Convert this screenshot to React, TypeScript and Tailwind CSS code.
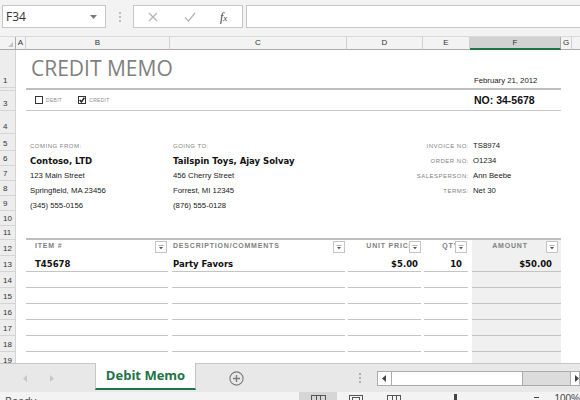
import React from 'react';

const grid = 'grid grid-cols-[16px_10px_144px_177px_76px_47px_91px_11px_1fr]';
const heavy = "font-['DejaVu_Sans',Verdana,sans-serif] font-bold";
const capLbl = 'text-[6px] leading-none tracking-[0.5px] text-[#7f7f7f]';
const reg = 'text-[7.75px] leading-none text-[#1a1a1a]';
const thLbl = 'text-[7px] leading-none font-bold tracking-[0.8px] text-[#808080] whitespace-nowrap';
const cellLine = 'border-b border-[#c4c4c4]';

const RowHead = ({ n }: { n?: string }) => (
  <div className="col-start-1 row-start-1 flex items-end pl-[3px] pb-[2px] bg-[#ededed] border-r border-b border-[#d4d4d4] text-[8px] leading-none text-[#333]">
    {n}
  </div>
);

const Row = ({ h, n, children }: { h: string; n?: string; children?: React.ReactNode }) => (
  <div className={`${grid} ${h}`}>
    <RowHead n={n} />
    {children}
  </div>
);

const Filter = ({ className }: { className: string }) => (
  <div className={`relative w-[12px] h-[12px] shrink-0 bg-white border border-[#c6c6c6] flex items-center justify-center ${className}`}>
    <svg width="6" height="5" viewBox="0 0 6 5">
      <path d="M0.5 0.5h5" stroke="#9a9a9a" strokeWidth="0.8" />
      <path d="M1 2h4L3 4.2z" fill="#555" />
    </svg>
  </div>
);

const Check = ({ on, label, className }: { on?: boolean; label: string; className?: string }) => (
  <div className={`flex items-center gap-[3px] ${className ?? ''}`}>
    <div className="w-[8px] h-[8px] border border-[#333] bg-white flex items-center justify-center">
      {on && (
        <svg width="6" height="6" viewBox="0 0 6 6">
          <path d="M0.7 3 L2.4 4.9 L5.4 0.8" stroke="#222" strokeWidth="1.5" fill="none" />
        </svg>
      )}
    </div>
    <span className="text-[5px] leading-none tracking-[0.3px] text-[#8c8c8c]">{label}</span>
  </div>
);

const FormulaBar = () => (
  <div className="h-[37px] shrink-0 bg-[#f3f3f3] flex items-start pt-[5px] border-b border-[#dadada]">
    <div className="ml-[2px] w-[104px] h-[23px] bg-white border border-[#c6c6c6] flex items-center pl-[3px] pr-[8px]">
      <span className="text-[12px] text-[#333] font-['Open_Sans',sans-serif]">F34</span>
      <svg className="ml-auto" width="7" height="4" viewBox="0 0 7 4">
        <path d="M0 0h7L3.5 4z" fill="#7a7a7a" />
      </svg>
    </div>
    <div className="w-[27px] h-[23px] flex flex-col items-center justify-center gap-[2px]">
      <div className="w-[2px] h-[2px] bg-[#bdbdbd]" />
      <div className="w-[2px] h-[2px] bg-[#bdbdbd]" />
      <div className="w-[2px] h-[2px] bg-[#bdbdbd]" />
    </div>
    <div className="w-[110px] h-[23px] bg-white border border-[#c6c6c6] flex items-center">
      <svg className="ml-[14px]" width="10" height="10" viewBox="0 0 10 10">
        <path d="M1 1L9 9M9 1L1 9" stroke="#b4b4b4" strokeWidth="1.2" />
      </svg>
      <svg className="ml-[26px]" width="12" height="10" viewBox="0 0 12 10">
        <path d="M1 5.5L4.5 9L11 1" stroke="#b4b4b4" strokeWidth="1.2" fill="none" />
      </svg>
      <span className="ml-[24px] font-['Liberation_Serif',serif] italic text-[12px] text-[#444] leading-none">
        f<span className="text-[9px]">x</span>
      </span>
    </div>
    <div className="ml-[3px] flex-1 h-[23px] bg-white border border-[#c6c6c6] border-r-0" />
  </div>
);

const ColHeaders = () => (
  <div className={`${grid} h-[13px] shrink-0 bg-[#f3f3f3] text-[8px] leading-none text-[#333]`}>
    <div className="relative border-r border-b border-[#ababab]">
      <svg className="absolute right-[2px] bottom-[2px]" width="5" height="5" viewBox="0 0 5 5">
        <path d="M5 0V5H0z" fill="#c4c4c4" />
      </svg>
    </div>
    <div className="flex items-center justify-center border-r border-b border-r-[#d0d0d0] border-b-[#ababab]">A</div>
    <div className="flex items-center justify-center border-r border-b border-r-[#d0d0d0] border-b-[#ababab]">B</div>
    <div className="flex items-center justify-center border-r border-b border-r-[#d0d0d0] border-b-[#ababab]">C</div>
    <div className="flex items-center justify-center border-r border-b border-r-[#d0d0d0] border-b-[#ababab]">D</div>
    <div className="flex items-center justify-center border-r border-b border-r-[#d0d0d0] border-b-[#ababab]">E</div>
    <div className="flex items-center justify-center bg-[#d2d2d2] border-r border-r-[#ababab] border-b-2 border-b-[#217346]">F</div>
    <div className="flex items-center justify-center border-r border-b border-r-[#d0d0d0] border-b-[#ababab]">G</div>
    <div className="border-b border-[#ababab]" />
  </div>
);

const TableRow = ({ n, vals }: { n: string; vals?: string[] }) => {
  const v = vals ?? ['', '', '', '', ''];
  return (
    <Row h="h-[16px]" n={n}>
      <div className={`col-start-3 row-start-1 mr-[2px] ${cellLine} flex items-end pl-[9px] pb-[3px] ${heavy} text-[8.5px] leading-none text-[#111]`}>{v[0]}</div>
      <div className={`col-start-4 row-start-1 mx-[2px] ${cellLine} flex items-end pl-[1px] pb-[3px] ${heavy} text-[8.5px] leading-none text-[#111]`}>{v[1]}</div>
      <div className={`col-start-5 row-start-1 ml-[1px] mr-[2px] ${cellLine} flex items-end justify-end pr-[3px] pb-[3px] ${heavy} text-[8.5px] leading-none text-[#111]`}>{v[2]}</div>
      <div className={`col-start-6 row-start-1 ml-[1px] mr-[2px] ${cellLine} flex items-end justify-end pr-[6px] pb-[3px] ${heavy} text-[8.5px] leading-none text-[#111]`}>{v[3]}</div>
      <div className={`col-start-7 row-start-1 ml-[2px] bg-[#f0f0f0] ${cellLine} flex items-end justify-end pr-[9px] pb-[3px] ${heavy} text-[8.5px] leading-none text-[#111]`}>{v[4]}</div>
    </Row>
  );
};

const TabBar = () => (
  <div className="h-[29px] shrink-0 bg-[#e8e8e8] border-t border-[#c6c6c6] flex items-start">
    <div className="w-[96px] h-[28px] flex items-center">
      <svg className="ml-[23px]" width="4" height="7" viewBox="0 0 4 7">
        <path d="M4 0V7L0 3.5z" fill="#c8c8c8" />
      </svg>
      <svg className="ml-[23px]" width="4" height="7" viewBox="0 0 4 7">
        <path d="M0 0V7L4 3.5z" fill="#c8c8c8" />
      </svg>
    </div>
    <div className="-mt-px w-[101px] h-[27px] bg-white border-x border-[#c6c6c6] border-b-2 border-b-[#217346] flex items-center justify-center font-['Open_Sans',sans-serif] font-bold text-[13px] text-[#217346]">
      Debit Memo
    </div>
    <div className="w-[82px] h-[28px] flex items-center justify-center">
      <svg width="15" height="15" viewBox="0 0 15 15">
        <circle cx="7.5" cy="7.5" r="6.6" stroke="#7a7a7a" strokeWidth="1.1" fill="none" />
        <path d="M7.5 4v7M4 7.5h7" stroke="#7a7a7a" strokeWidth="1.3" />
      </svg>
    </div>
    <div className="w-[100px] h-[28px] flex flex-col items-start justify-center gap-[2px] pl-[82px]">
      <div className="w-[2px] h-[2px] bg-[#b0b0b0]" />
      <div className="w-[2px] h-[2px] bg-[#b0b0b0]" />
      <div className="w-[2px] h-[2px] bg-[#b0b0b0]" />
    </div>
    <div className="mt-[7px] flex-1 h-[15px] flex">
      <div className="w-[15px] h-[15px] bg-white border border-[#ababab] flex items-center justify-center">
        <svg width="4" height="7" viewBox="0 0 4 7">
          <path d="M4 0V7L0 3.5z" fill="#444" />
        </svg>
      </div>
      <div className="w-[131px] h-[15px] bg-white border-y border-r border-[#ababab]" />
      <div className="w-[47px] h-[15px] bg-[#dcdcdc] border-y border-[#ababab]" />
      <div className="flex-1 h-[15px] bg-white border border-[#ababab] flex items-center pl-[4px]">
        <svg width="4" height="7" viewBox="0 0 4 7">
          <path d="M0 0V7L4 3.5z" fill="#444" />
        </svg>
      </div>
    </div>
  </div>
);

const StatusBar = () => (
  <div className="h-[8px] shrink-0 bg-[#f3f3f3] flex items-start relative overflow-hidden">
    <span className="ml-[5px] mt-[3px] text-[11px] leading-none text-[#444] font-['Open_Sans',sans-serif]">Ready</span>
    <div className="ml-auto flex items-start">
      <div className="w-[38px] h-[8px] bg-[#d6d6d6] flex justify-center pt-[3px]">
        <div className="w-[15px] h-[6px] border-t border-x border-[#555] flex justify-evenly">
          <div className="w-px bg-[#555]" />
          <div className="w-px bg-[#555]" />
        </div>
      </div>
      <div className="ml-[12px] w-[14px] h-[6px] mt-[3px] border-t border-x border-[#555] flex justify-center pt-[1px]">
        <div className="w-[8px] h-[4px] border border-[#555]" />
      </div>
      <div className="ml-[24px] w-[14px] h-[6px] mt-[3px] border-t border-x border-[#555] flex justify-evenly">
        <div className="w-px bg-[#555]" />
        <div className="w-px bg-[#555]" />
      </div>
      <div className="ml-[53px] w-[3px] h-[6px] mt-[2px] bg-[#444]" />
      <div className="ml-[77px] w-[5px] h-px mt-[5px] bg-[#444]" />
      <span className="ml-[15px] mt-[2px] text-[10px] leading-none text-[#444]">100%</span>
    </div>
  </div>
);

export default function App() {
  return (
    <div className="w-[580px] h-[400px] overflow-hidden bg-white flex flex-col font-['Liberation_Sans',Arial,sans-serif]">
      <FormulaBar />
      <ColHeaders />
      <div className="flex-1 min-h-0 overflow-hidden">
        <Row h="h-[38px]" n="1">
          <div className="col-start-3 col-end-6 row-start-1 flex items-end pl-[5px] pb-[9px] font-['Open_Sans',sans-serif] font-normal text-[21px] leading-none text-[#7f7f7f]">
            CREDIT MEMO
          </div>
          <div className={`col-start-7 col-end-9 row-start-1 flex items-end pl-[4px] pb-[3px] ${reg}`}>February 21, 2012</div>
        </Row>
        <Row h="h-[3px]">
          <div className="col-start-3 col-end-8 row-start-1 h-[2px] bg-[#bfbfbf]" />
        </Row>
        <Row h="h-[20px]" n="3">
          <div className="col-start-3 col-end-8 row-start-1 border-b border-[#c8c8c8]" />
          <div className="col-start-3 col-end-5 row-start-1 flex items-center pl-[9px] pb-[2px]">
            <Check label="DEBIT" />
            <Check on label="CREDIT" className="ml-[16px]" />
          </div>
          <div className="col-start-7 col-end-9 row-start-1 flex items-end pl-[4px] pb-[6px] font-bold text-[10.5px] leading-none text-[#111]">
            NO: 34-5678
          </div>
        </Row>
        <Row h="h-[23px]" n="4" />
        <Row h="h-[17px]" n="5">
          <div className={`col-start-3 row-start-1 flex items-end pl-[4px] pb-[2px] ${capLbl}`}>COMING FROM:</div>
          <div className={`col-start-4 row-start-1 flex items-end pl-[3px] pb-[2px] ${capLbl}`}>GOING TO:</div>
          <div className={`col-start-5 col-end-7 row-start-1 flex items-end justify-end pr-[1px] pb-[2px] ${capLbl}`}>INVOICE NO:</div>
          <div className={`col-start-7 row-start-1 flex items-end pl-[3px] pb-[1px] ${reg}`}>TS8974</div>
        </Row>
        <Row h="h-[15px]" n="6">
          <div className={`col-start-3 row-start-1 flex items-end pl-[4px] pb-[1px] ${heavy} text-[8.5px] leading-none text-[#111]`}>Contoso, LTD</div>
          <div className={`col-start-4 row-start-1 flex items-end pl-[3px] pb-[1px] whitespace-nowrap ${heavy} text-[8.5px] leading-none text-[#111]`}>
            Tailspin Toys, Ajay Solvay
          </div>
          <div className={`col-start-5 col-end-7 row-start-1 flex items-end justify-end pr-[1px] pb-[2px] ${capLbl}`}>ORDER NO:</div>
          <div className={`col-start-7 row-start-1 flex items-end pl-[3px] pb-[1px] ${reg}`}>O1234</div>
        </Row>
        <Row h="h-[15px]" n="7">
          <div className={`col-start-3 row-start-1 flex items-end pl-[4px] pb-[1px] ${reg}`}>123 Main Street</div>
          <div className={`col-start-4 row-start-1 flex items-end pl-[3px] pb-[1px] ${reg}`}>456 Cherry Street</div>
          <div className={`col-start-5 col-end-7 row-start-1 flex items-end justify-end pr-[1px] pb-[2px] ${capLbl}`}>SALESPERSON:</div>
          <div className={`col-start-7 row-start-1 flex items-end pl-[3px] pb-[1px] ${reg}`}>Ann Beebe</div>
        </Row>
        <Row h="h-[15px]" n="8">
          <div className={`col-start-3 row-start-1 flex items-end pl-[4px] pb-[1px] ${reg}`}>Springfield, MA 23456</div>
          <div className={`col-start-4 row-start-1 flex items-end pl-[3px] pb-[1px] ${reg}`}>Forrest, MI 12345</div>
          <div className={`col-start-5 col-end-7 row-start-1 flex items-end justify-end pr-[1px] pb-[2px] ${capLbl}`}>TERMS:</div>
          <div className={`col-start-7 row-start-1 flex items-end pl-[3px] pb-[1px] ${reg}`}>Net 30</div>
        </Row>
        <Row h="h-[15px]" n="9">
          <div className={`col-start-3 row-start-1 flex items-end pl-[4px] pb-[1px] ${reg}`}>(345) 555-0156</div>
          <div className={`col-start-4 row-start-1 flex items-end pl-[3px] pb-[1px] ${reg}`}>(876) 555-0128</div>
        </Row>
        <Row h="h-[15px]" n="10" />
        <Row h="h-[14px]" n="11">
          <div className="col-start-3 col-end-8 row-start-1 self-end h-[2px] bg-[#bfbfbf]" />
        </Row>
        <Row h="h-[16px]" n="12">
          <div className="col-start-3 row-start-1 mr-[2px] flex items-start pt-[1px] pl-[9px]">
            <span className={`mt-[1px] ${thLbl}`}>ITEM #</span>
            <Filter className="ml-auto mr-[1px]" />
          </div>
          <div className="col-start-4 row-start-1 mx-[2px] flex items-start pt-[1px] pl-[1px]">
            <span className={`mt-[1px] ${thLbl}`}>DESCRIPTION/COMMENTS</span>
            <Filter className="ml-auto" />
          </div>
          <div className="col-start-5 row-start-1 ml-[1px] mr-[2px] flex items-start pt-[1px] overflow-hidden">
            <span className={`mt-[1px] flex-1 text-right mr-[-5px] ${thLbl}`}>UNIT PRICE</span>
            <Filter className="" />
          </div>
          <div className="col-start-6 row-start-1 ml-[1px] mr-[2px] flex items-start pt-[1px] overflow-hidden">
            <span className={`mt-[1px] flex-1 text-right mr-[-4px] ${thLbl}`}>QTY</span>
            <Filter className="mr-[1px]" />
          </div>
          <div className="col-start-7 row-start-1 ml-[2px] bg-[#f0f0f0] flex items-start pt-[1px]">
            <span className={`mt-[1px] flex-1 text-center pl-[8px] ${thLbl}`}>AMOUNT</span>
            <Filter className="mr-[3px] ml-[6px]" />
          </div>
        </Row>
        <TableRow n="13" vals={['T45678', 'Party Favors', '$5.00', '10', '$50.00']} />
        <TableRow n="14" />
        <TableRow n="15" />
        <TableRow n="16" />
        <TableRow n="17" />
        <TableRow n="18" />
        <Row h="h-[16px]" n="19">
          <div className="col-start-7 row-start-1 ml-[2px] bg-[#f0f0f0]" />
        </Row>
      </div>
      <TabBar />
      <StatusBar />
    </div>
  );
}
